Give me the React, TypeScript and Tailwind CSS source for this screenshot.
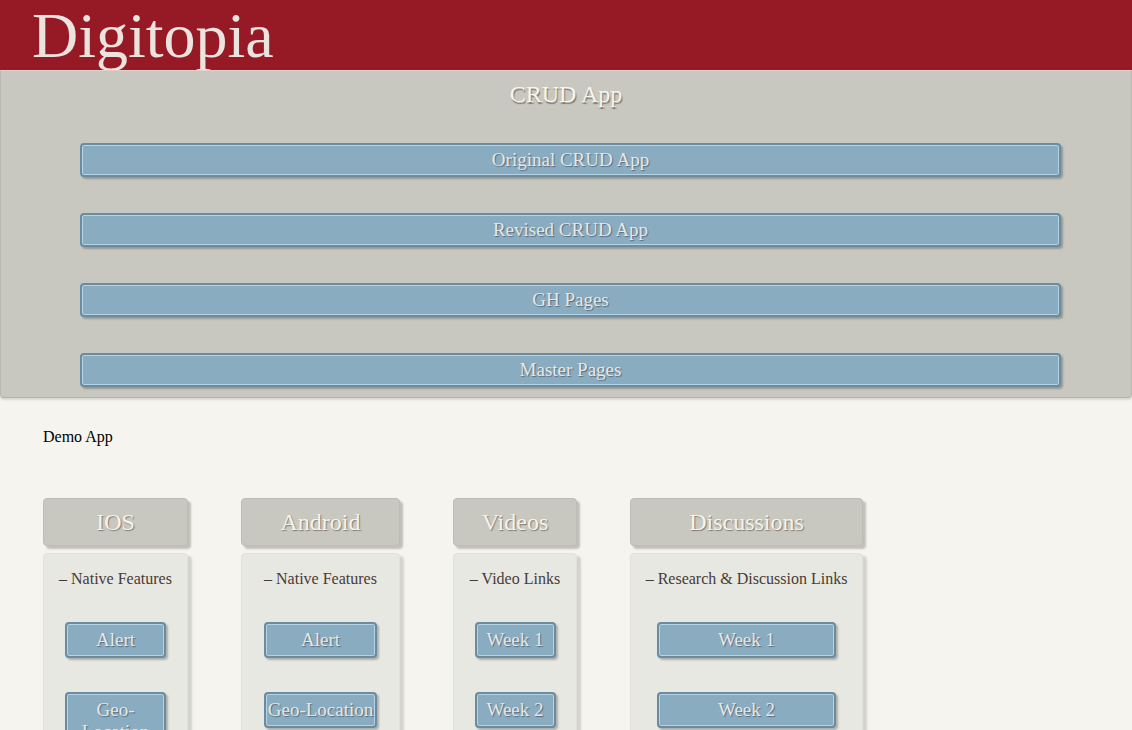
import React from 'react';

type Column = {
    title: string;
    subtitle: string;
    width: string;
    button: string;
    links: string[];
};

const crudLinks = ['Original CRUD App', 'Revised CRUD App', 'GH Pages', 'Master Pages'];

const columns: Column[] = [
    { title: 'IOS', subtitle: 'Native Features', width: 'w-[145px]', button: 'w-[101px]', links: ['Alert', 'Geo-Location'] },
    { title: 'Android', subtitle: 'Native Features', width: 'w-[159px]', button: 'w-[113px]', links: ['Alert', 'Geo-Location'] },
    { title: 'Videos', subtitle: 'Video Links', width: 'w-[124px]', button: 'w-[81px]', links: ['Week 1', 'Week 2'] },
    { title: 'Discussions', subtitle: 'Research & Discussion Links', width: 'w-[233px]', button: 'w-[179px]', links: ['Week 1', 'Week 2'] },
];

const BlueButton: React.FC<{ label: string; className?: string }> = ({ label, className = '' }) => (
    <a
        href="#"
        className={`block rounded-[4px] border-2 border-[#6b8ca0] bg-[#8aacc1] text-center text-[19px] leading-[22px] text-[#e6e8e6] [text-shadow:1px_1px_1px_#56697a] shadow-[inset_0_0_0_1px_#b4d3e4,2px_2px_2px_rgba(0,0,0,0.25)] ${className}`}
    >
        {label}
    </a>
);

const CardColumn: React.FC<{ col: Column }> = ({ col }) => (
    <div className={`${col.width} flex flex-col gap-[7px]`}>
        <div className="h-[48px] rounded-[4px] border border-[#bebcb4] bg-[#c9c8c0] flex items-center justify-center text-[24px] text-[#f6f3ec] [text-shadow:1px_1px_1px_#7d7a72] shadow-[3px_3px_2px_#c2c0b8]">
            {col.title}
        </div>
        <div className="min-h-[200px] rounded-t-[4px] border border-[#e2e1db] bg-[#e8e8e3] pt-[15px] flex flex-col items-center shadow-[4px_3px_2px_#d4d3cc]">
            <p className="text-[16px] leading-[20px] text-[#473b35]">– {col.subtitle}</p>
            <div className="mt-[33px] flex flex-col items-center gap-[34px]">
                {col.links.map(link => (
                    <BlueButton key={link} label={link} className={`${col.button} py-[5px]`} />
                ))}
            </div>
        </div>
    </div>
);

export default function App() {
    return (
        <div className="min-h-[730px] bg-[#f5f4ee] font-['Liberation_Serif',serif] overflow-hidden">
            <header className="h-[70px] overflow-hidden bg-[#961a25] pl-[32px] pt-[4px]">
                <h1 className="text-[64px] leading-[64px] text-[#ebe3de]">Digitopia</h1>
            </header>

            <section className="border border-t-[#dcd2cb] border-x-[#b9b7af] border-b-[#b3b1a9] rounded-b-[4px] bg-[#c9c8c0] pt-[7px] pb-[10px] shadow-[0_2px_2px_#d9d8d1]">
                <h2 className="text-center text-[24px] leading-[32px] text-[#f8f5ee] [text-shadow:1px_2px_1px_#7d7a72]">CRUD App</h2>
                <div className="mt-[33px] ml-[79px] mr-[70px] flex flex-col gap-[36px]">
                    {crudLinks.map(link => (
                        <BlueButton key={link} label={link} className="h-[34px] leading-[30px]" />
                    ))}
                </div>
            </section>

            <p className="ml-[43px] mt-[29px] text-[16px] leading-[20px] text-black">Demo App</p>

            <div className="ml-[43px] mt-[51px] flex items-start gap-[53px]">
                {columns.map(col => (
                    <CardColumn key={col.title} col={col} />
                ))}
            </div>
        </div>
    );
}
